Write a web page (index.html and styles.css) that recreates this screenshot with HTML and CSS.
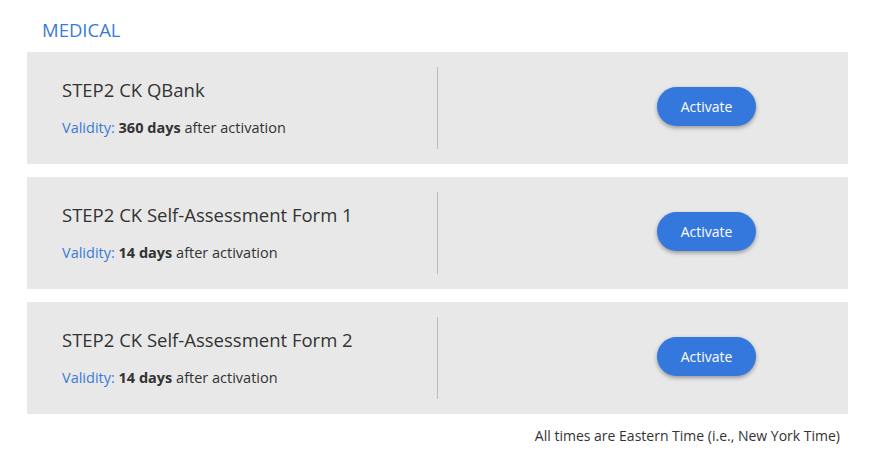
FILE: index.html
```html
<!DOCTYPE html>
<html>
<head>
<meta charset="utf-8">
<link rel="stylesheet" href="styles.css">
</head>
<body>
<div class="page">
  <h2 class="section-title">MEDICAL</h2>
  <div class="cards">
    <div class="card">
      <div class="info">
        <div class="name">STEP2 CK QBank</div>
        <div class="validity"><span class="label">Validity:</span> <b>360 days</b> after activation</div>
      </div>
      <div class="action"><button class="btn">Activate</button></div>
    </div>
    <div class="card">
      <div class="info">
        <div class="name">STEP2 CK Self-Assessment Form 1</div>
        <div class="validity"><span class="label">Validity:</span> <b>14 days</b> after activation</div>
      </div>
      <div class="action"><button class="btn">Activate</button></div>
    </div>
    <div class="card">
      <div class="info">
        <div class="name">STEP2 CK Self-Assessment Form 2</div>
        <div class="validity"><span class="label">Validity:</span> <b>14 days</b> after activation</div>
      </div>
      <div class="action"><button class="btn">Activate</button></div>
    </div>
  </div>
  <p class="note">All times are Eastern Time (i.e., New York Time)</p>
</div>
</body>
</html>
```
FILE: styles.css
```css
* { box-sizing: border-box; }
html, body { margin: 0; padding: 0; background: #fff; }
body { font-family: "Open Sans", "Liberation Sans", sans-serif; color: #333; }
.page { padding: 18px 36px 0 27px; width: 884px; }
.section-title {
  margin: 0 0 10px 15px;
  font-size: 18.5px;
  font-weight: 400;
  color: #3a7bd8;
  line-height: 24px;
}
.cards { display: flex; flex-direction: column; gap: 13px; }
.card {
  display: flex;
  height: 112px;
  background: #e8e8e8;
  padding: 15px 0;
}
.info {
  width: 411px;
  border-right: 1px solid #bababa;
  padding: 11px 0 0 35px;
}
.name { font-size: 18.5px; line-height: 24px; color: #333; }
.validity { font-size: 14.5px; line-height: 20px; margin-top: 16px; color: #333; }
.validity .label { color: #3a7bd8; }
.validity b { font-weight: 700; }
.action {
  flex: 1;
  display: flex;
  align-items: center;
  justify-content: flex-end;
  padding-right: 92px;
}
.btn {
  width: 99px;
  height: 39px;
  margin-bottom: 3px;
  padding: 0;
  border: 0;
  border-radius: 20px;
  background: #3478de;
  color: #fff;
  font-family: "Open Sans", "Liberation Sans", sans-serif;
  font-size: 14px;
  box-shadow: 0 2px 4px rgba(0,0,0,0.35);
}
.note {
  margin: 12px 8px 0 0;
  text-align: right;
  font-size: 14px;
  color: #333;
  line-height: 20px;
}
```
